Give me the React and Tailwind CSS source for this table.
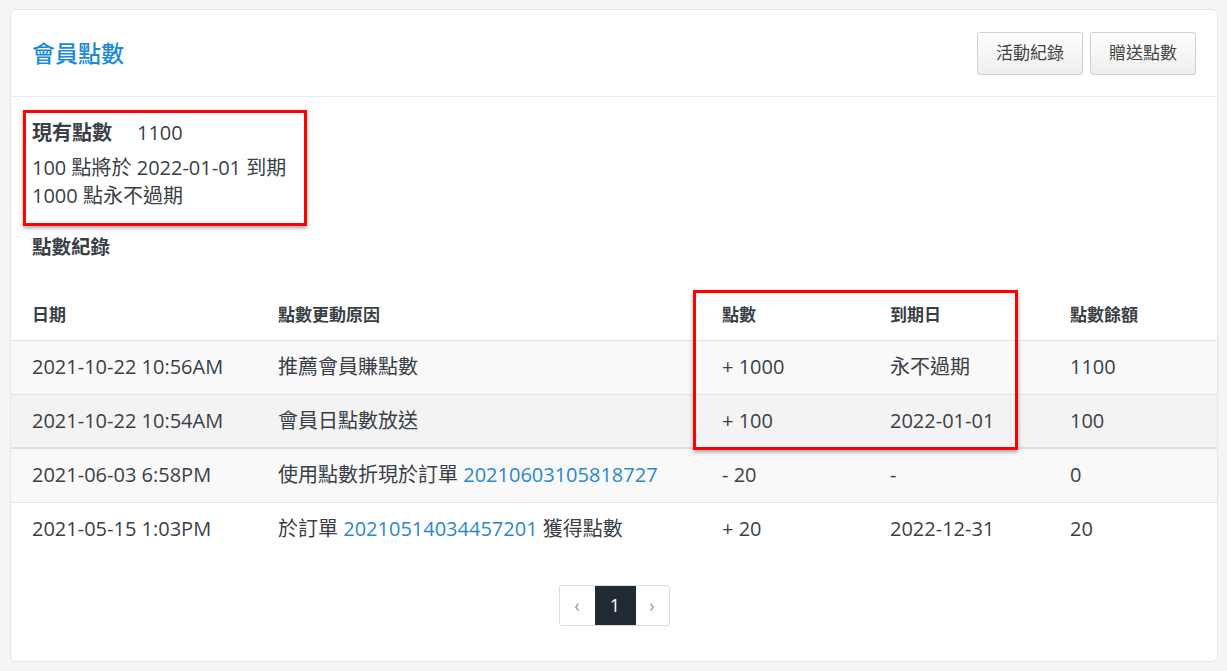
import React from 'react'

const rows = [
  { date: '2021-10-22 10:56AM', reason: ['推薦會員賺點數'], points: '+ 1000', expire: '永不過期', balance: '1100', bg: 'bg-[#f9f9f9]', border: 'border-b border-[#e3e3e3]' },
  { date: '2021-10-22 10:54AM', reason: ['會員日點數放送'], points: '+ 100', expire: '2022-01-01', balance: '100', bg: 'bg-[#f3f3f3]', border: 'border-b-2 border-[#dedede]' },
  { date: '2021-06-03 6:58PM', reason: ['使用點數折現於訂單 ', '20210603105818727', ''], points: '- 20', expire: '-', balance: '0', bg: 'bg-[#f9f9f9]', border: 'border-b border-[#e3e3e3]' },
  { date: '2021-05-15 1:03PM', reason: ['於訂單 ', '20210514034457201', ' 獲得點數'], points: '+ 20', expire: '2022-12-31', balance: '20', bg: 'bg-white', border: '' },
]

function Reason({ parts }) {
  if (parts.length === 1) return <span>{parts[0]}</span>
  return (
    <span>
      {parts[0]}
      <a className="text-[#2a87d0]">{parts[1]}</a>
      {parts[2]}
    </span>
  )
}

export default function App() {
  return (
    <div className="min-h-screen bg-[#f5f5f5] pt-[9px] pl-[10px] pr-[9px] pb-[8px] font-['Open_Sans','Noto_Sans_CJK_TC',sans-serif] text-[#3a3f47]">
      <div className="relative rounded-md border border-[#e6e6e6] bg-white">
        {/* header */}
        <div className="flex h-[87px] items-center justify-between border-b border-[#ebebeb] pl-[21px] pr-[21px]">
          <h1 className="text-[23px] font-medium text-[#1a8ad6]">會員點數</h1>
          <div className="flex gap-[7px]">
            <button className="h-[43px] rounded-[3px] border border-[#cfcfcf] bg-gradient-to-b from-white to-[#ededed] px-[18px] text-[17px] text-[#444]">活動紀錄</button>
            <button className="h-[43px] rounded-[3px] border border-[#cfcfcf] bg-gradient-to-b from-white to-[#ededed] px-[18px] text-[17px] text-[#444]">贈送點數</button>
          </div>
        </div>

        {/* summary */}
        <div className="px-[21px] pt-[22px]">
          <div className="flex text-[20px] leading-[28px]">
            <span className="w-[105px] font-bold">現有點數</span>
            <span>1100</span>
          </div>
          <div className="mt-[7px] text-[20px] leading-[28px]">100 點將於 2022-01-01 到期</div>
          <div className="text-[20px] leading-[28px]">1000 點永不過期</div>
          <div className="mt-[23px] text-[19.5px] font-bold leading-[28px]">點數紀錄</div>
        </div>

        {/* table */}
        <table className="mt-[29px] w-full table-fixed border-collapse text-left">
          <colgroup>
            <col className="w-[246px]" />
            <col className="w-[444px]" />
            <col className="w-[168px]" />
            <col className="w-[180px]" />
            <col />
          </colgroup>
          <thead>
            <tr className="h-[50px] border-b border-[#e3e3e3] text-[17px]">
              <th className="pl-[21px] font-bold">日期</th>
              <th className="pl-[21px] font-bold">點數更動原因</th>
              <th className="pl-[21px] font-bold">點數</th>
              <th className="pl-[21px] font-bold">到期日</th>
              <th className="pl-[21px] font-bold">點數餘額</th>
            </tr>
          </thead>
          <tbody className="text-[20px]">
            {rows.map((r) => (
              <tr key={r.date} className={`h-[54px] ${r.bg} ${r.border}`}>
                <td className="pl-[21px]">{r.date}</td>
                <td className="pl-[21px]"><Reason parts={r.reason} /></td>
                <td className="pl-[21px]">{r.points}</td>
                <td className="pl-[21px]">{r.expire}</td>
                <td className="pl-[21px]">{r.balance}</td>
              </tr>
            ))}
          </tbody>
        </table>

        {/* pagination */}
        <div className="flex justify-center pt-[29px] pb-[35px]">
          <div className="flex h-[41px] overflow-hidden rounded-[3px] border border-[#dcdcdc] text-[18px]">
            <span className="flex w-[35px] items-center justify-center text-[#999]">‹</span>
            <span className="flex w-[41px] items-center justify-center bg-[#222a33] text-white">1</span>
            <span className="flex w-[33px] items-center justify-center text-[#999]">›</span>
          </div>
        </div>

        {/* highlight boxes */}
        <div className="pointer-events-none absolute left-[12px] top-[100px] h-[116px] w-[284px] border-[3px] border-[#ff0000] shadow-[0_2px_4px_rgba(0,0,0,0.35)]" />
        <div className="pointer-events-none absolute left-[682px] top-[280px] h-[160px] w-[325px] border-[3px] border-[#ff0000] shadow-[0_2px_4px_rgba(0,0,0,0.35)]" />
      </div>
    </div>
  )
}
